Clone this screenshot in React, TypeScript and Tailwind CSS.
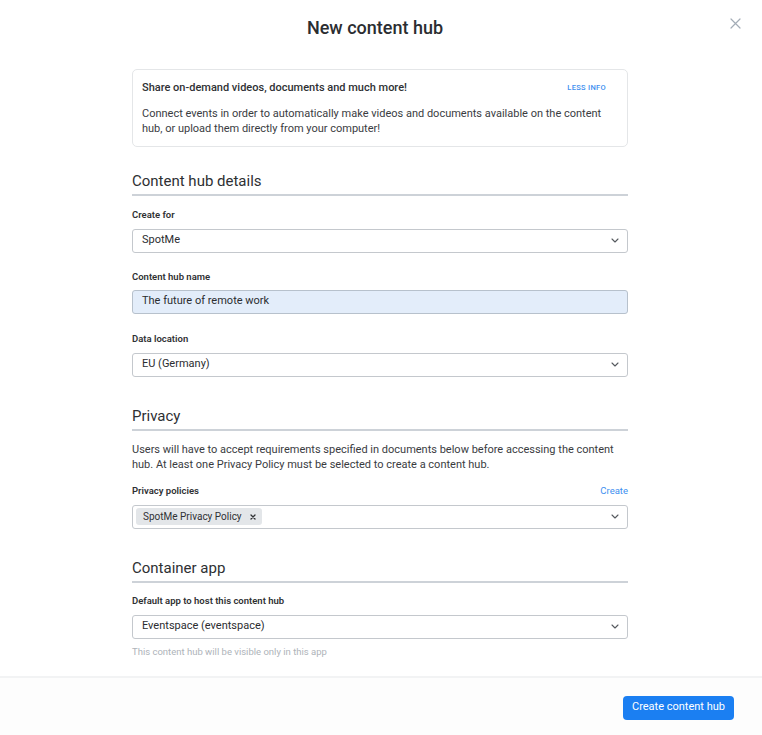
import React from "react";

function Chevron() {
  return (
    <svg width="8" height="5" viewBox="0 0 8 5" fill="none" className="shrink-0">
      <path d="M1 1l3 3 3-3" stroke="#55595e" strokeWidth="1.1" strokeLinecap="round" strokeLinejoin="round" />
    </svg>
  );
}

function Select({ value }: { value: string }) {
  return (
    <div className="mt-[7px] flex h-[24px] items-center justify-between rounded-[3px] border border-[#c4c8cd] bg-white pl-[9px] pr-[8px] text-[11px] text-[#2b2d30]">
      <span>{value}</span>
      <Chevron />
    </div>
  );
}

function Label({ children, className = "" }: { children: React.ReactNode; className?: string }) {
  return <div className={`text-[9.5px] font-semibold leading-[14px] text-[#2f3133] ${className}`}>{children}</div>;
}

function Heading({ children, className = "" }: { children: React.ReactNode; className?: string }) {
  return (
    <div className={`border-b-2 border-[#cdd2d8] pb-[4px] text-[15px] leading-[18px] text-[#2e3033] ${className}`}>
      {children}
    </div>
  );
}

export default function App() {
  return (
    <div className="flex min-h-[735px] w-full flex-col bg-white" style={{ fontFamily: "Roboto, 'Noto Sans', sans-serif" }}>
      <div className="relative flex h-[54px] items-center justify-center pr-[12px]">
        <div className="text-[18px] font-medium text-[#2b2d31]">New content hub</div>
        <button className="absolute right-[20px] top-[17px] p-[1px]">
          <svg width="11" height="11" viewBox="0 0 11 11">
            <path d="M1 1l9 9M10 1l-9 9" stroke="#a3acb6" strokeWidth="1.2" strokeLinecap="round" />
          </svg>
        </button>
      </div>

      <div className="ml-[132px] w-[496px] pt-[15px]">
        <div className="rounded-[5px] border border-[#e4e6e8] px-[9px] pb-[10px] pt-[10px]">
          <div className="flex items-center justify-between">
            <div className="text-[11px] font-medium leading-[16px] text-[#2f3134]">
              Share on-demand videos, documents and much more!
            </div>
            <div className="mr-[12px] text-[7.5px] font-medium tracking-[0.3px] text-[#3d8ff0]">LESS INFO</div>
          </div>
          <div className="mt-[9.5px] text-[11px] leading-[15px] text-[#3a3c3f]">
            Connect events in order to automatically make videos and documents available on the content hub, or upload them directly from your computer!
          </div>
        </div>

        <Heading className="mt-[25px]">Content hub details</Heading>

        <Label className="mt-[12px]">Create for</Label>
        <Select value="SpotMe" />

        <Label className="mt-[17px]">Content hub name</Label>
        <div className="mt-[6px] flex h-[24px] items-center rounded-[3px] border border-[#b7c1cc] bg-[#e3edfa] pl-[9px] text-[11px] text-[#2b2d30]">
          The future of remote work
        </div>

        <Label className="mt-[18px]">Data location</Label>
        <Select value="EU (Germany)" />

        <Heading className="mt-[30px]">Privacy</Heading>
        <div className="mt-[11px] text-[11px] leading-[15px] text-[#3a3c3f]">
          Users will have to accept requirements specified in documents below before accessing the content hub. At least one Privacy Policy must be selected to create a content hub.
        </div>

        <div className="mt-[12px] flex items-center justify-between">
          <Label>Privacy policies</Label>
          <span className="text-[9.5px] leading-[14px] text-[#3d8ff0]">Create</span>
        </div>
        <div className="mt-[7px] flex h-[24px] items-center justify-between rounded-[3px] border border-[#c4c8cd] bg-white pl-[3px] pr-[8px]">
          <div className="flex h-[17px] items-center gap-[8px] rounded-[3px] bg-[#e3e6e9] pl-[7px] pr-[6px] text-[10px] text-[#2f3134]">
            <span>SpotMe Privacy Policy</span>
            <svg width="6" height="6" viewBox="0 0 6 6">
              <path d="M1 1l4 4M5 1l-4 4" stroke="#2f3134" strokeWidth="1.3" strokeLinecap="round" />
            </svg>
          </div>
          <Chevron />
        </div>

        <Heading className="mt-[30px]">Container app</Heading>
        <Label className="mt-[11px]">Default app to host this content hub</Label>
        <Select value="Eventspace (eventspace)" />
        <div className="mt-[7px] text-[9.5px] leading-[12px] text-[#aeb3b9]">This content hub will be visible only in this app</div>
      </div>

      <div className="mt-[18px] flex flex-1 justify-end border-t-2 border-[#f2f3f4] bg-[#fdfdfd] pr-[28px] pt-[18px]">
        <button className="h-[24px] w-[111px] rounded-[4px] bg-[#1b7ff2] text-[11px] text-white">Create content hub</button>
      </div>
    </div>
  );
}
